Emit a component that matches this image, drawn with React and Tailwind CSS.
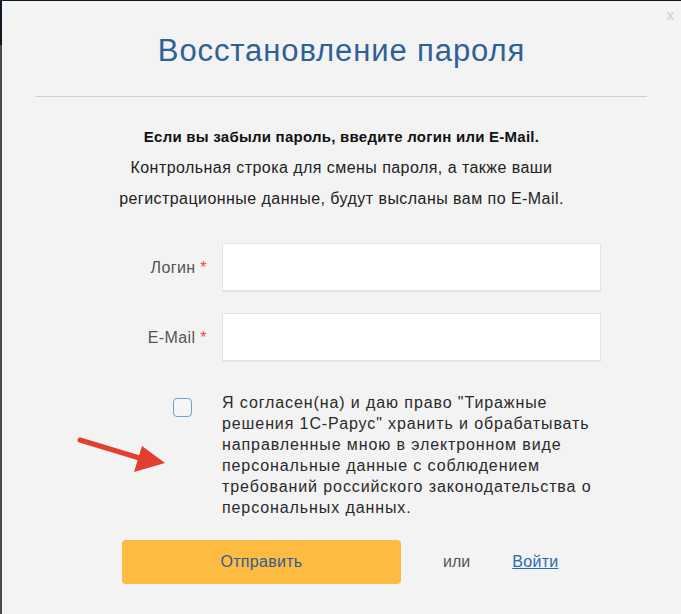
import React from "react";

export default function App() {
  const consent = [
    "Я согласен(на) и даю право \"Тиражные",
    "решения 1С-Рарус\" хранить и обрабатывать",
    "направленные мною в электронном виде",
    "персональные данные с соблюдением",
    "требований российского законодательства о",
    "персональных данных.",
  ];

  return (
    <div className="h-[614px] w-[681px] overflow-hidden bg-[linear-gradient(to_bottom,#0e1822_45px,#4a4a4a_45px)] pl-[2px] pt-px font-['Liberation_Sans',sans-serif]">
      <div className="relative h-[613px] w-[679px] bg-[#f3f3f3]">
        <button className="absolute right-[7px] top-[6px] text-[15px] leading-none text-[#cdcdcd]">x</button>

        {/* Title */}
        <h1 className="pt-[30px] text-center text-[31px] leading-[40px] tracking-[0.9px] text-[#2f6197]">
          Восстановление пароля
        </h1>
        <div className="mx-[34px] mt-[25px] h-px bg-[#cfcfcf]"></div>

        {/* Description */}
        <div className="mt-[24px] text-center text-[16px] leading-[31px] tracking-[0.45px] text-[#222]">
          <p className="text-[15px] font-bold tracking-[0.25px] text-[#111]">Если вы забыли пароль, введите логин или E-Mail.</p>
          <p>
            Контрольная строка для смены пароля, а также ваши
            <br />
            регистрационные данные, будут высланы вам по E-Mail.
          </p>
        </div>

        {/* Form */}
        <div className="mt-[29px] flex flex-col gap-[21px]">
          <div className="flex items-center">
            <label className="w-[205px] text-right text-[16px] tracking-[0.4px] text-[#555]">
              Логин <span className="text-[#f0483e]">*</span>
            </label>
            <input className="ml-[15px] h-[49px] w-[379px] border border-b-2 border-[#e4e4e4] bg-white outline-none" />
          </div>
          <div className="flex items-center">
            <label className="w-[205px] text-right text-[16px] tracking-[0.4px] text-[#555]">
              E-Mail <span className="text-[#f0483e]">*</span>
            </label>
            <input className="ml-[15px] h-[49px] w-[379px] border border-b-2 border-[#e4e4e4] bg-white outline-none" />
          </div>
        </div>

        {/* Consent */}
        <div className="relative mt-[30px] flex">
          <div className="flex w-[220px] justify-end pr-[30px] pt-[6px]">
            <span className="block h-[19px] w-[19px] rounded-[4px] border-[1.5px] border-[#72a0cc] bg-[#f5f5f5]"></span>
          </div>
          <p className="text-[16px] leading-[21px] tracking-[0.9px] text-[#2a2a2a]">
            {consent.map((l, i) => (
              <React.Fragment key={i}>
                {l}
                {i < consent.length - 1 && <br />}
              </React.Fragment>
            ))}
          </p>
          <svg className="absolute left-[74px] top-[42px]" width="95" height="40" viewBox="0 0 95 40">
            <line x1="4" y1="6" x2="70" y2="26" stroke="#e33f31" strokeWidth="5" strokeLinecap="round" />
            <polygon points="89,29 66,12 58,38" fill="#e33f31" />
          </svg>
        </div>

        {/* Actions */}
        <div className="mt-[22px] flex items-center pl-[120px]">
          <button className="h-[44px] w-[279px] rounded-[4px] bg-[#fdbb42] text-[16px] tracking-[0.3px] text-[#2f5d91]">
            Отправить
          </button>
          <span className="ml-[42px] text-[16px] text-[#555]">или</span>
          <a href="#" className="ml-[42px] text-[16px] tracking-[0.3px] text-[#2a6cb0] underline">
            Войти
          </a>
        </div>
      </div>
    </div>
  );
}
